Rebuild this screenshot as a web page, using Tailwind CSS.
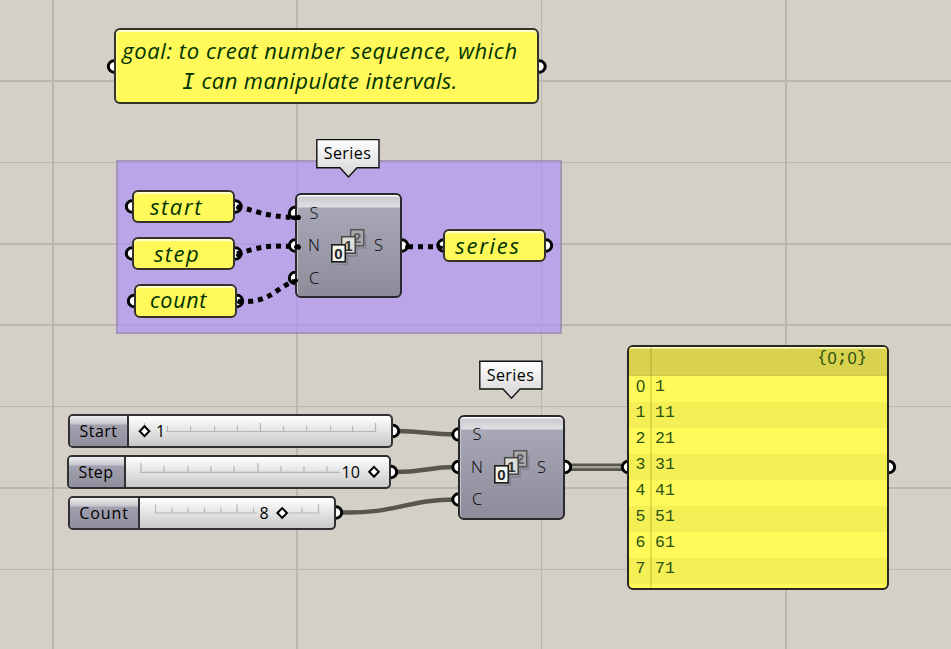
<!DOCTYPE html>
<html lang="en">
<head>
<meta charset="utf-8">
<title>Series</title>
<script src="https://cdn.jsdelivr.net/npm/@tailwindcss/browser@4"></script>
</head>
<body class="bg-[#d4d0c8]">
<main class="relative w-[951px] h-[649px] overflow-hidden bg-[#d4d0c8] font-['Open_Sans','Noto_Sans',sans-serif] text-black">

<!-- canvas grid -->
<svg class="absolute inset-0" width="951" height="649" fill="none" stroke="#bbb7af">
  <path stroke-width="2" d="M53 0V649M297 0V649M786 0V649M0 81H951M0 244H951M0 325H951M0 488H951"/>
  <path d="M541.5 0V649M0 162.5H951M0 406.5H951M0 569.5H951"/>
</svg>

<!-- group -->
<div class="absolute left-[116px] top-[160px] w-[446px] h-[174px] border-2 border-[#9787b5]/80 bg-[#ae8efb]/65 bg-clip-padding"></div>

<!-- wires and ports -->
<svg class="absolute inset-0" width="951" height="649" fill="none">
  <g stroke="#575650" stroke-width="4.500">
    <path d="M396 431C425 431 428 434.500 456 434.500M394 472C425 472 428 467 456 467M339 512.500C398 514 405 499.500 456 499.500"/>
    <path stroke-width="7.500" d="M568 467.200H625"/><path stroke="#a2a396" stroke-width="2.200" d="M568 467.200H625"/>
  </g>
  <g fill="#fff" stroke="#000" stroke-width="3">
    <circle cx="114" cy="66.500" r="5.700"/><circle cx="539.500" cy="66.500" r="5.700"/>
    <circle cx="132" cy="206.500" r="5.700"/><circle cx="235.500" cy="206.500" r="5.700"/>
    <circle cx="132" cy="253.500" r="5.700"/><circle cx="235.500" cy="253.500" r="5.700"/>
    <circle cx="134" cy="301" r="5.700"/><circle cx="237" cy="301" r="5.700"/>
    <circle cx="295" cy="213" r="5.700"/><circle cx="295" cy="245.500" r="5.700"/><circle cx="295" cy="278" r="5.700"/>
    <circle cx="402" cy="245.500" r="5.700"/><circle cx="443.500" cy="245.500" r="5.700"/><circle cx="546" cy="245.500" r="5.700"/>
    <circle cx="393" cy="431" r="5.700"/><circle cx="391" cy="472" r="5.700"/><circle cx="336" cy="512.500" r="5.700"/>
    <circle cx="458.500" cy="434.500" r="5.700"/><circle cx="458.500" cy="467" r="5.700"/><circle cx="458.500" cy="499.500" r="5.700"/>
    <circle cx="565" cy="467" r="5.700"/><circle cx="628" cy="467" r="5.700"/><circle cx="889" cy="467" r="5.700"/>
  </g>
</svg>

<!-- text panels -->
<section class="absolute left-[114px] top-[28px] w-[425px] h-[76px] rounded-[6px] border-2 border-[#33332a] bg-[#fff95a] shadow-[inset_0_2px_1px_#ffffd0,inset_1px_0_0_#ffff9a] flex flex-col items-center pt-[5px] font-medium italic text-[22px] leading-[30px] text-[#003300] whitespace-nowrap">
  <span class="tracking-[0.57px] mr-[13px]">goal: to creat number sequence, which</span>
  <span class="tracking-[0.4px] mr-[13px]"><span class="font-['DejaVu_Sans_Mono',monospace] font-normal text-[21px]">I</span> can manipulate intervals.</span>
</section>
<section class="absolute left-[132px] top-[190px] w-[103px] h-[33px] rounded-[6px] border-2 border-[#33332a] bg-[#fff95a] shadow-[inset_0_2px_1px_#ffffd0] flex items-center justify-center pr-[14px] pb-[2px] font-medium italic text-[22px] leading-none tracking-[1.6px] text-[#003300]">start</section>
<section class="absolute left-[132px] top-[237px] w-[103px] h-[33px] rounded-[6px] border-2 border-[#33332a] bg-[#fff95a] shadow-[inset_0_2px_1px_#ffffd0] flex items-center justify-center pr-[13px] pb-[2px] font-medium italic text-[22px] leading-none tracking-[1.4px] text-[#003300]">step</section>
<section class="absolute left-[134px] top-[284px] w-[103px] h-[34px] rounded-[6px] border-2 border-[#33332a] bg-[#fff95a] shadow-[inset_0_2px_1px_#ffffd0] flex items-center justify-center pr-[14px] pb-[2px] font-medium italic text-[21.500px] leading-none tracking-[0.7px] text-[#003300]">count</section>
<section class="absolute left-[443px] top-[229px] w-[103px] h-[33px] rounded-[6px] border-2 border-[#33332a] bg-[#fff95a] shadow-[inset_0_2px_1px_#ffffd0] flex items-center justify-center pr-[13px] pb-[2px] font-medium italic text-[22px] leading-none tracking-[1.7px] text-[#003300]">series</section>

<!-- series components -->
<section class="absolute left-[295px] top-[193px] w-[107px] h-[105px] rounded-[6px] border-2 border-[#29292d] bg-[linear-gradient(#c6c6cb_0,#dfdfe4_12px,#a8a7b5_13px,#8e8c9b_100%)] shadow-[inset_0_1.5px_0_#fff,inset_1px_0_0_#c4c4cc] flex items-center justify-between pl-[8px] pr-[17px] text-[16.5px] font-light">
  <div class="w-[18px] flex flex-col items-center leading-[32.5px]"><span>S</span><span>N</span><span>C</span></div>
  <svg class="shrink-0 -ml-[2px]" width="38" height="38" viewBox="328 226 38 38" font-family="Liberation Sans, sans-serif" font-weight="bold" font-size="15" text-anchor="middle">
    <path d="M354 247h10.500v-14M345 255h11v-13M334 264h12.500v-15" stroke="#70707e" stroke-opacity=".45" stroke-width="2" fill="none"/>
    <rect x="349.700" y="228.700" width="13" height="16" fill="#aaa" stroke="#565656" stroke-width="1.500"/><text x="356.200" y="241.700" fill="#606060">2</text>
    <rect x="340.700" y="235.700" width="13.500" height="16.500" fill="#deded8" stroke="#444" stroke-width="1.500"/><text x="347.500" y="249.500" fill="#333">1</text>
    <rect x="330.800" y="243.800" width="13.500" height="17" fill="#f5f5f0" stroke="#1c1c1c" stroke-width="1.600"/><text x="337.500" y="257.900" fill="#222">0</text>
  </svg>
  <span>S</span>
</section>
<section class="absolute left-[458px] top-[414.5px] w-[107px] h-[105px] rounded-[6px] border-2 border-[#29292d] bg-[linear-gradient(#c6c6cb_0,#dfdfe4_12px,#a8a7b5_13px,#8e8c9b_100%)] shadow-[inset_0_1.5px_0_#fff,inset_1px_0_0_#c4c4cc] flex items-center justify-between pl-[8px] pr-[17px] text-[16.5px] font-light">
  <div class="w-[18px] flex flex-col items-center leading-[32.5px]"><span>S</span><span>N</span><span>C</span></div>
  <svg class="shrink-0 -ml-[2px]" width="38" height="38" viewBox="328 226 38 38" font-family="Liberation Sans, sans-serif" font-weight="bold" font-size="15" text-anchor="middle">
    <path d="M354 247h10.500v-14M345 255h11v-13M334 264h12.500v-15" stroke="#70707e" stroke-opacity=".45" stroke-width="2" fill="none"/>
    <rect x="349.700" y="228.700" width="13" height="16" fill="#aaa" stroke="#565656" stroke-width="1.500"/><text x="356.200" y="241.700" fill="#606060">2</text>
    <rect x="340.700" y="235.700" width="13.500" height="16.500" fill="#deded8" stroke="#444" stroke-width="1.500"/><text x="347.500" y="249.500" fill="#333">1</text>
    <rect x="330.800" y="243.800" width="13.500" height="17" fill="#f5f5f0" stroke="#1c1c1c" stroke-width="1.600"/><text x="337.500" y="257.900" fill="#222">0</text>
  </svg>
  <span>S</span>
</section>

<!-- name balloons -->
<div class="absolute left-[316px] top-[138px] w-[64px] h-[40px]">
  <svg class="absolute inset-0" width="64" height="40"><defs><linearGradient id="b" x2="0" y2="1"><stop stop-color="#fff"/><stop offset="1" stop-color="#d4d4d4"/></linearGradient></defs><path d="M.8 1.600H63V29.800H41L32.500 39 24 29.800H.8Z" fill="url(#b)" stroke="#111" stroke-width="1.400"/></svg>
  <div class="relative h-[30px] pr-[1px] flex items-center justify-center text-[16px] tracking-[0.45px]">Series</div>
</div>
<div class="absolute left-[479px] top-[360px] w-[64px] h-[40px]">
  <svg class="absolute inset-0" width="64" height="40"><path d="M.8 1.200H63V29H41L32.500 38.200 24 29H.8Z" fill="url(#b)" stroke="#111" stroke-width="1.400"/></svg>
  <div class="relative h-[30px] pr-[1px] flex items-center justify-center text-[16px] tracking-[0.45px]">Series</div>
</div>

<!-- number sliders -->
<section class="absolute left-[68px] top-[414px] w-[325px] h-[34px] rounded-[5px] border-2 border-[#303033] bg-[linear-gradient(#fff_0,#e9e9e9_40%,#c9c9c9_100%)] flex overflow-hidden text-[16px]">
  <div class="w-[59px] border-r-2 border-[#303033] bg-[linear-gradient(#eee_0,#c6c6ce_8px,#a3a1b0_9px,#8f8e9d_100%)] flex items-center justify-center tracking-[0.5px]">Start</div>
  <svg class="flex-1" viewBox="129 416 262 30" width="262" height="30"><path d="M166 431.500H376M144.500 423V431M167.500 426V431M190.500 426V431M214.500 426V431M237.500 426V431M260.500 423V431M283.500 426V431M306.500 426V431M330.500 426V431M352.500 426V431M375.500 423V431" stroke="#b5b5b5" stroke-width="1.200"/><path d="M144.500 426.300l4.800 4.900-4.800 4.900-4.800-4.900z" fill="#fff" stroke="#000" stroke-width="2"/><text x="156" y="437" font-size="16">1</text></svg>
</section>
<section class="absolute left-[67px] top-[455px] w-[324px] h-[34px] rounded-[5px] border-2 border-[#303033] bg-[linear-gradient(#fff_0,#e9e9e9_40%,#c9c9c9_100%)] flex overflow-hidden text-[16px]">
  <div class="w-[57px] border-r-2 border-[#303033] bg-[linear-gradient(#eee_0,#c6c6ce_8px,#a3a1b0_9px,#8f8e9d_100%)] flex items-center justify-center pr-[1px] tracking-[0.5px]">Step</div>
  <svg class="flex-1" viewBox="126 457 263 30" width="263" height="30"><path d="M140 472.300H340M141 463V472M164 466V472M188 466V472M211 466V472M234 466V472M258 463V472M281 466V472M304 466V472M327 466V472" stroke="#b5b5b5" stroke-width="1.200"/><path d="M374 466.900l4.800 4.900-4.800 4.900-4.800-4.900z" fill="#fff" stroke="#000" stroke-width="2"/><text x="341.500" y="477.800" font-size="16">10</text></svg>
</section>
<section class="absolute left-[68px] top-[495.5px] w-[268px] h-[34px] rounded-[5px] border-2 border-[#303033] bg-[linear-gradient(#fff_0,#e9e9e9_40%,#c9c9c9_100%)] flex overflow-hidden text-[16px]">
  <div class="w-[70px] border-r-2 border-[#303033] bg-[linear-gradient(#eee_0,#c6c6ce_8px,#a3a1b0_9px,#8f8e9d_100%)] flex items-center justify-center tracking-[0.9px]">Count</div>
  <svg class="flex-1" viewBox="140 497.500 194 30" width="194" height="30"><path d="M155 512.500H257M289 512.500H319M155.500 504V512M172 507V512M188 507V512M204.500 507V512M221 507V512M237 504V512M253.500 507V512M302 507V512M318.500 504V512" stroke="#b5b5b5" stroke-width="1.200"/><path d="M282.200 507.600l4.800 4.900-4.800 4.900-4.800-4.900z" fill="#fff" stroke="#000" stroke-width="2"/><text x="259.500" y="518.200" font-size="16">8</text></svg>
</section>

<!-- data panel -->
<section class="absolute left-[627px] top-[344.5px] w-[262px] h-[245px] rounded-[6px] border-2 border-[#28281f] bg-[#fff95a] overflow-hidden font-['Liberation_Mono',monospace] text-[16.500px] text-[#2c5310]">
  <div class="h-[29.500px] bg-[#d8d24f] border-b border-[#d0ca4c] shadow-[inset_0_1.5px_0_#ffffd0] flex justify-end pr-[20px] leading-[22px]">{<span class="font-['Liberation_Sans',sans-serif] w-[10px] text-center">0</span><span class="font-bold">;</span><span class="font-['Liberation_Sans',sans-serif] w-[10px] text-center">0</span>}</div>
  <div class="h-[26px] flex leading-[22px]"><span class="font-['Liberation_Sans',sans-serif] w-[23px] text-center leading-[20px]">0</span><span class="pl-[3px]">1</span></div>
  <div class="h-[26px] flex leading-[22px] bg-[#f5ef56]"><span class="w-[23px] text-center">1</span><span class="pl-[3px]">11</span></div>
  <div class="h-[26px] flex leading-[22px]"><span class="w-[23px] text-center">2</span><span class="pl-[3px]">21</span></div>
  <div class="h-[26px] flex leading-[22px] bg-[#f5ef56]"><span class="w-[23px] text-center">3</span><span class="pl-[3px]">31</span></div>
  <div class="h-[26px] flex leading-[22px]"><span class="w-[23px] text-center">4</span><span class="pl-[3px]">41</span></div>
  <div class="h-[26px] flex leading-[22px] bg-[#f5ef56]"><span class="w-[23px] text-center">5</span><span class="pl-[3px]">51</span></div>
  <div class="h-[26px] flex leading-[22px]"><span class="w-[23px] text-center">6</span><span class="pl-[3px]">61</span></div>
  <div class="h-[26px] flex leading-[22px] bg-[#f5ef56]"><span class="w-[23px] text-center">7</span><span class="pl-[3px]">71</span></div>
  <div class="absolute left-[21px] top-0 bottom-0 w-[2px] bg-[#8c8410]/25"></div>
</section>

<!-- dotted wires run over the nodes -->
<svg class="absolute inset-0" width="951" height="649" fill="none" stroke="#000" stroke-width="5">
  <g stroke-dasharray="5 5">
    <path d="M237 207C257 210 262 217 300 217.500"/>
    <path d="M237 254C262 246 270 245 300 247"/>
    <path d="M238 301.500C270 303 273 290 294 281"/>
    <path d="M408 246.700H440"/>
  </g>
  <path stroke-width="4" stroke-linecap="round" d="M238 207.500L240 206M238 255L240 253.500M239 302H241M293 217.500H299M296 247L299 247.500M293 282L296 280.500M407 246.700H409M440 247.500H441"/>
</svg>
</main>
</body>
</html>
